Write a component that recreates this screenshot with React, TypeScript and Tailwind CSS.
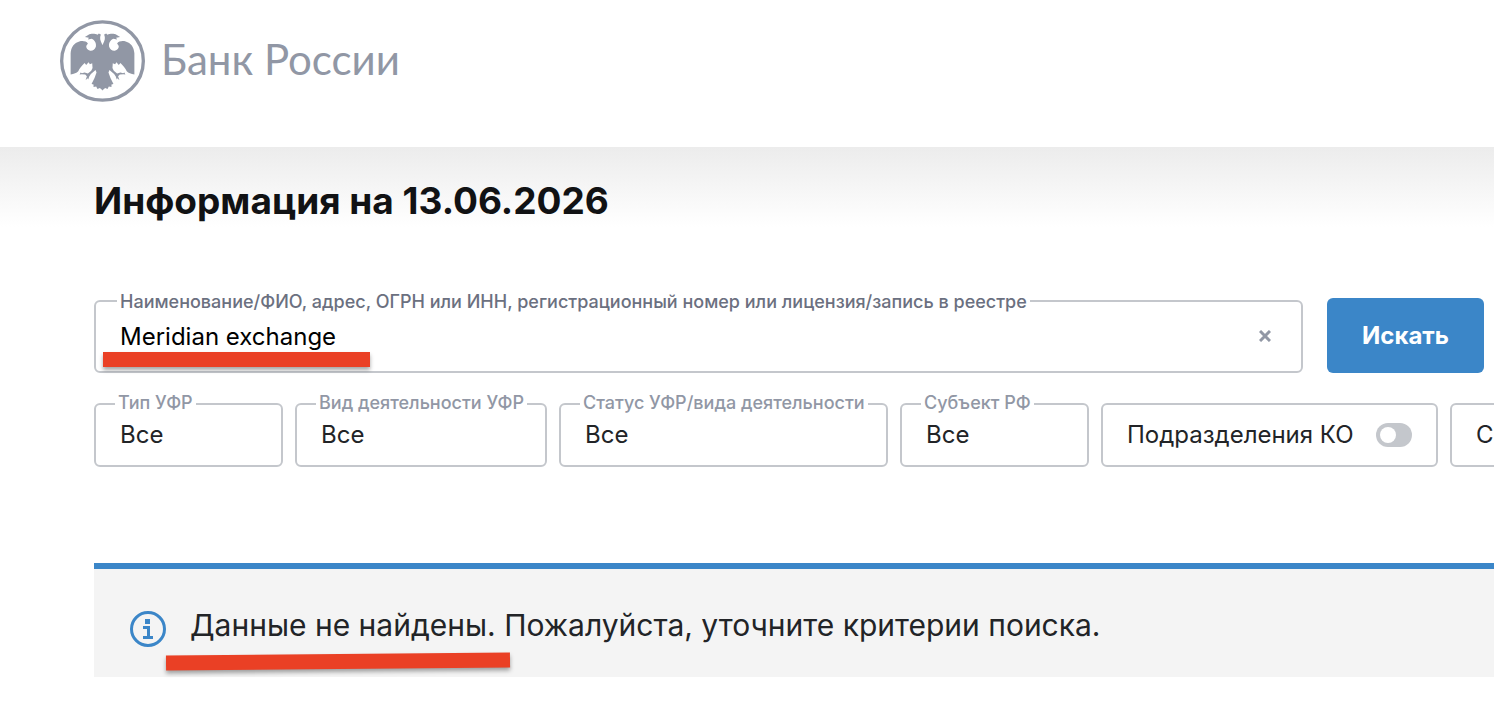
import React, { useState } from 'react';

interface FilterSelectProps {
  id: string;
  label: string;
  className: string;
}

const CrestLogo: React.FC = () => (
  <svg viewBox="0 0 256 246" className="w-[85px] h-[82px] shrink-0" aria-hidden="true">
    <ellipse cx="128" cy="123" rx="123" ry="118" fill="none" stroke="#9197a5" strokeWidth="10" />
    <g fill="#9197a5">
      <path d="M129 75 L128 75 C124 67 120 60 121 51 L123 43 L117 40 L113 44 C106 40 92 40 86 44 L75 51 L87 53 L84 58 L95 56 C105 60 110 70 108 80 C105 89 98 93 91 92 C83 91 79 85 79 78 L84 70 C79 63 68 61 58 64 C43 68 33 81 32 100 L32 164 C42 162 50 159 55 154 C59 145 66 137 74 129 L79 135 L86 127 L90 133 L97 130 L98 144 L94 152 L84 161 L74 158 L66 160 L62 158 L59 164 L65 163 L76 164 L81 169 L77 181 L83 175 L85 179 L88 170 L93 162 L101 155 L107 150 L110 158 L104 174 L95 192 L101 194 L101 201 L109 200 L113 207 L120 204 L128 211 L129 211 Z" />
      <path transform="translate(256 0) scale(-1 1)" d="M129 75 L128 75 C124 67 120 60 121 51 L123 43 L117 40 L113 44 C106 40 92 40 86 44 L75 51 L87 53 L84 58 L95 56 C105 60 110 70 108 80 C105 89 98 93 91 92 C83 91 79 85 79 78 L84 70 C79 63 68 61 58 64 C43 68 33 81 32 100 L32 164 C42 162 50 159 55 154 C59 145 66 137 74 129 L79 135 L86 127 L90 133 L97 130 L98 144 L94 152 L84 161 L74 158 L66 160 L62 158 L59 164 L65 163 L76 164 L81 169 L77 181 L83 175 L85 179 L88 170 L93 162 L101 155 L107 150 L110 158 L104 174 L95 192 L101 194 L101 201 L109 200 L113 207 L120 204 L128 211 L129 211 Z" />
      <path d="M124 76h8v130h-8z" />
    </g>
  </svg>
);

const InfoIcon: React.FC = () => (
  <svg viewBox="0 0 36 36" className="size-9 shrink-0" fill="#3b86c8" aria-hidden="true">
    <circle cx="18" cy="18" r="16.5" fill="none" stroke="#3b86c8" strokeWidth="3" />
    <path d="M15 8h5v5h-5zM13 15h7v10h3v3h-10v-3h4v-7h-4z" />
  </svg>
);

const FilterSelect: React.FC<FilterSelectProps> = ({ id, label, className }) => (
  <div className={`relative shrink-0 ${className}`}>
    <label
      htmlFor={id}
      className="absolute left-[21px] -top-3 px-[3px] bg-white text-lg leading-6 text-[#9197a5] font-medium whitespace-nowrap"
    >
      {label}
    </label>
    <select
      id={id}
      className="w-full h-16 appearance-none rounded-md border-2 border-[#c4c7cc] bg-transparent px-6 text-2xl text-[#222427]"
    >
      <option>Все</option>
    </select>
  </div>
);

const FilterToggle: React.FC<{ id: string; label: string }> = ({ id, label }) => (
  <div className="flex h-16 w-[337px] shrink-0 items-center justify-between rounded-md border-2 border-[#c4c7cc] px-6">
    <label htmlFor={id} className="text-2xl text-[#222427] whitespace-nowrap">
      {label}
    </label>
    <input
      id={id}
      type="checkbox"
      role="switch"
      className="h-6 w-9 appearance-none rounded-full bg-[#c4c7cc] p-1 before:block before:size-4 before:rounded-full before:bg-white checked:bg-[#3b86c8] checked:before:ml-3"
    />
  </div>
);

const App: React.FC = () => {
  const [query, setQuery] = useState('Meridian exchange');

  return (
    <div className="min-h-screen overflow-x-hidden bg-white font-[Inter,'Noto_Sans',sans-serif] text-[#222427]">
      <header className="h-[147px] pt-5 pl-15">
        <a href="#" className="inline-flex items-center gap-4">
          <CrestLogo />
          <span className="pb-1 font-[Lato,sans-serif] text-[42px] leading-12 text-[#9197a5]">Банк России</span>
        </a>
      </header>

      <main className="bg-linear-to-b from-[#ececec] to-white to-[80px] bg-no-repeat pt-7 pl-[94px]">
        <h1 className="text-[37px] leading-[52px] font-bold text-[#111214]">Информация на 13.06.2026</h1>

        <form className="pt-[71px]" onSubmit={(e) => e.preventDefault()}>
          <div className="flex items-end gap-6 pr-[10px]">
            <div className="relative flex-1">
              <label
                htmlFor="query"
                className="absolute left-[23px] -top-[10px] px-[3px] bg-white text-lg leading-6 font-medium text-[#6b7080] whitespace-nowrap"
              >
                Наименование/ФИО, адрес, ОГРН или ИНН, регистрационный номер или лицензия/запись в реестре
              </label>
              <input
                id="query"
                type="text"
                value={query}
                onChange={(e) => setQuery(e.target.value)}
                className="block h-[73px] w-full rounded-md border-2 border-[#c4c7cc] bg-transparent pl-6 pr-16 text-2xl text-black"
              />
              <button
                type="button"
                aria-label="Очистить"
                onClick={() => setQuery('')}
                className="absolute right-[26px] top-6 flex size-6 items-center justify-center"
              >
                <svg viewBox="0 0 12 12" className="size-3" stroke="#9197a5" strokeWidth="3" aria-hidden="true">
                  <path d="M1 1l10 10M11 1L1 11" />
                </svg>
              </button>
              <span className="absolute left-[9px] top-[52px] h-[15px] w-[267px] bg-[#ea4025] shadow-[0_3px_4px_rgba(0,0,0,0.35)]" />
            </div>
            <button type="submit" className="h-[75px] w-[157px] rounded-md bg-[#3b86c8] text-2xl font-bold text-white">
              Искать
            </button>
          </div>

          <div className="flex gap-3 pt-[30px]">
            <FilterSelect id="type" label="Тип УФР" className="w-[189px]" />
            <FilterSelect id="activity" label="Вид деятельности УФР" className="w-[252px]" />
            <FilterSelect id="status" label="Статус УФР/вида деятельности" className="w-[329px]" />
            <FilterSelect id="region" label="Субъект РФ" className="w-[189px]" />
            <FilterToggle id="branches" label="Подразделения КО" />
            <FilterToggle id="extra" label="С" />
          </div>
        </form>

        <section className="relative mt-24 flex items-center gap-6 border-t-6 border-[#3b86c8] bg-[#f4f4f4] px-9 pt-9 pb-6">
          <InfoIcon />
          <p className="pb-2 text-3xl leading-10">Данные не найдены. Пожалуйста, уточните критерии поиска.</p>
          <span className="absolute left-[72px] top-[85px] h-[15px] w-[344px] rotate-[-0.5deg] bg-[#ea4025] shadow-[0_3px_4px_rgba(0,0,0,0.35)]" />
        </section>
      </main>
    </div>
  );
};

export default App;
